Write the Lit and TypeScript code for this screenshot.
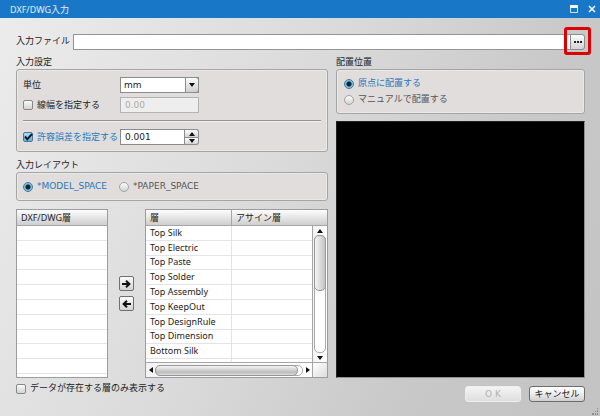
import { LitElement, html, css, svg, nothing } from "lit";
import { customElement, property } from "lit/decorators.js";

const LAYERS = [
  "Top Silk", "Top Electric", "Top Paste", "Top Solder", "Top Assembly",
  "Top KeepOut", "Top DesignRule", "Top Dimension", "Bottom Silk", "",
];

const ARROWS: Record<string, string> = {
  up: "M0 4 L3 0 L6 4 Z",
  down: "M0 0 L6 0 L3 4 Z",
  left: "M4 0 L4 6 L0 3 Z",
  right: "M0 0 L4 3 L0 6 Z",
};

const arrow = (dir: string) => {
  const tall = dir === "left" || dir === "right";
  const w = tall ? 4 : 6;
  const h = tall ? 6 : 4;
  return html`<svg width=${w} height=${h} viewBox="0 0 ${w} ${h}" aria-hidden="true">
    ${svg`<path d=${ARROWS[dir]} fill="#111"/>`}
  </svg>`;
};

@customElement("choice-box")
class ChoiceBox extends LitElement {
  @property() type = "checkbox";
  @property() label = "";
  @property() name = "";
  @property({ type: Boolean }) checked = false;

  static styles = css`
    :host { display: block; }
    label { display: flex; align-items: center; gap: 4px; white-space: nowrap; }
    .mark { display: grid; width: 10px; height: 10px; flex: none; }
    .mark > * { grid-area: 1 / 1; margin: 0; }
    input {
      appearance: none; box-sizing: border-box; width: 10px; height: 10px;
      border: 1px solid #858789; border-radius: 2px;
      background: linear-gradient(#fafafa, #d2d4d4);
    }
    .radio { border-radius: 50%; border-color: #a3a3a3; }
    .on { border-color: #47799b; background: linear-gradient(#b5dbf0, #5fb2df); }
    .radio.on { background: radial-gradient(circle, #15242e 0 2px, #71b8df 3px, #a9d7ef 5px); }
    svg { overflow: visible; pointer-events: none; }
    .text { color: var(--text, #222); }
    .text.lit { color: #2878bb; }
  `;

  render() {
    const on = this.checked ? "on" : "";
    return html`<label>
      <span class="mark">
        <input class="${this.type} ${on}" type=${this.type} name=${this.name} .checked=${this.checked}>
        ${this.checked && this.type === "checkbox"
          ? html`<svg width="10" height="10" viewBox="0 0 10 10"><path d="M2 4.5 L4.3 7.3 L9 2" fill="none" stroke="#0c1a24" stroke-width="2"/></svg>`
          : nothing}
      </span>
      <span class="text ${this.checked ? "lit" : ""}">${this.label}</span>
    </label>`;
  }
}

@customElement("app-root")
class AppRoot extends LitElement {
  static styles = css`
    :host {
      display: flex; flex-direction: column; position: relative;
      box-sizing: border-box; min-height: 100vh;
      font: 9px/13px "DejaVu Sans", "Noto Sans CJK JP", sans-serif;
      color: #222;
      background: linear-gradient(115deg, #ececec, #dadada 45%, #c8c8c8 75%, #c3c3c3);
    }
    * { box-sizing: border-box; }
    button, input, select { font: inherit; color: inherit; margin: 0; padding: 0; }
    button {
      display: flex; align-items: center; justify-content: center;
      border: 1px solid #8b8d8f; background: linear-gradient(#fcfcfc, #d3d3d3);
    }
    svg { display: block; flex: none; }

    .title {
      display: flex; align-items: center; justify-content: space-between;
      height: 18px; padding: 0 4px 0 10px; background: #1877c7; color: #e4f0fa;
    }
    .title h1 { margin: 0; font: inherit; font-family: "Noto Sans", "Noto Sans CJK JP", sans-serif; }
    .window-tools { display: flex; gap: 10px; }
    .window-tools button { border: 0; background: none; width: 8px; height: 10px; }

    main { flex: 1; display: flex; flex-direction: column; padding: 16px 15px 0 16px; }
    .file { display: flex; align-items: center; height: 15px; margin-bottom: 7px; }
    .file label { width: 57px; white-space: nowrap; }
    .file input {
      flex: 1; min-width: 0; height: 16px; background: #fff;
      border: 1px solid #929496; border-right: 0; border-radius: 0;
    }
    .browse-wrap { position: relative; display: flex; }
    .browse { width: 15px; height: 16px; border-radius: 0 3px 3px 0; }
    .highlight {
      position: absolute; inset: -7px -6px -5px -6px; pointer-events: none;
      border: 3px solid #dc0000; border-radius: 3px;
    }

    .columns { flex: 1; display: grid; grid-template-columns: 312fr 249fr; gap: 8px; }
    .column { display: flex; flex-direction: column; min-width: 0; }
    h2 { margin: 0; font: inherit; }
    .panel {
      border: 1px solid #a5a5a5; border-radius: 3px; background: #e1dddd;
      box-shadow: inset 0 0 0 1px #ebe8e8;
    }
    .settings {
      display: grid; grid-template: 16px 16px 8px 16px / 97px 79px 1fr;
      row-gap: 4px; align-items: center; padding: 7px 6px 6px; margin-bottom: 7px;
    }
    .settings > choice-box, .settings > label { grid-column: 1; }
    .settings hr {
      grid-column: 1 / -1; width: 100%; height: 2px;
      margin: 0; border: 0; border-top: 1px solid #939393; border-bottom: 1px solid #f2f0f0;
    }
    .field { display: flex; height: 16px; }
    .field > input, select {
      width: 100%; min-width: 0; height: 16px; padding: 0 4px; border-radius: 0;
      border: 1px solid #898b8d; background: #fff;
    }
    .field > input:disabled { background: #efeeee; border-color: #b3b3b3; color: #aaa; }
    .combo { display: grid; grid-template-columns: 1fr 14px; height: 16px; }
    .combo select { appearance: none; grid-area: 1 / 1 / 2 / 3; padding: 0 3px; }
    .combo span {
      grid-area: 1 / 2; display: grid; place-items: center; pointer-events: none;
      border: 1px solid #8b8d8f; border-radius: 0 3px 3px 0;
      background: linear-gradient(#fcfcfc, #cfcfcf);
    }
    .spin { display: flex; flex-direction: column; flex: none; width: 14px; }
    .spin button { height: 8px; border-left: 0; }
    .spin button:first-child { border-radius: 0 3px 0 0; border-bottom: 0; }
    .spin button:last-child { border-radius: 0 0 3px 0; }

    .radios { display: flex; align-items: center; gap: 12px; height: 29px; padding: 0 6px; margin-bottom: 8px; }
    .radios choice-box, .placement choice-box { --text: #555; }
    .placement {
      display: flex; flex-direction: column; justify-content: center; gap: 3px;
      height: 45px; padding: 0 7px; margin-bottom: 7px;
    }
    .preview { flex: 1; background: #000; border: 1px solid #8f8f8f; border-top-color: #222; border-left-color: #222; }

    .layers { flex: 1; display: grid; grid-template-columns: 92px 1fr 183px; min-height: 169px; }
    .list { display: grid; border: 1px solid #9b9ba2; background: #fff; overflow: hidden; height: 169px; }
    .transfer { display: flex; flex-direction: column; align-items: center; justify-content: center; gap: 5px; }
    .transfer button { width: 15px; height: 15px; border-radius: 2px; border-color: #707070; }
    table { width: 100%; height: 164px; table-layout: fixed; border-collapse: separate; border-spacing: 0; font-family: "Noto Sans", "Noto Sans CJK JP", sans-serif; }
    th {
      height: 16px; padding: 0 4px; text-align: left; font-weight: normal; line-height: 14px;
      background: linear-gradient(#fdfdfd, #cecece); border-bottom: 1px solid #a6a6a6;
    }
    th + th { border-left: 1px solid #a6a6a6; }
    td { height: 14px; padding: 0 4px; line-height: 12px; border-bottom: 1px solid #e4e4e8; white-space: nowrap; }
    td + td { border-left: 1px solid #e0e0ee; }
    .assign { grid-template: 16px 1fr 15px / 1fr 15px; }
    .assign col:first-child { width: 85px; }
    .clip { grid-area: 1 / 1 / 3 / 3; overflow: hidden; min-height: 0; }
    .bar { display: flex; align-items: center; background: linear-gradient(90deg, #f3f3f3, #fff); }
    .bar button { border: 0; background: none; }
    .vertical { grid-area: 2 / 2; flex-direction: column; border-left: 1px solid #a6a6a6; z-index: 1; }
    .vertical button { height: 9px; width: 14px; }
    .horizontal { grid-area: 3 / 1; border-top: 1px solid #a6a6a6; }
    .horizontal button { width: 9px; height: 14px; }
    .track { flex: 1; border: 1px solid #aaa; border-radius: 5px; background: #fff; }
    .vertical .track { width: 12px; }
    .horizontal .track { height: 11px; }
    .thumb { border: 1px solid #989898; border-radius: 5px; }
    .vertical .thumb { height: 56px; width: 12px; margin: -1px; background: linear-gradient(90deg, #f5f5f5, #c3c3c3); }
    .horizontal .thumb { width: 98%; height: 11px; margin: -1px; background: linear-gradient(#f5f5f5, #bcbcbc 70%, #ddd); }
    .corner { grid-area: 3 / 2; border: solid #a6a6a6; border-width: 1px 0 0 1px; background: linear-gradient(135deg, #fff, #ddd); }

    footer { display: flex; justify-content: space-between; height: 38px; padding-top: 4px; }
    .actions { display: flex; gap: 8px; padding-top: 4px; }
    .actions button { width: 56px; height: 16px; border-radius: 3px; border-color: #6c6c6c; background: linear-gradient(#fff, #ededed 50%, #cfcfcf); }
    .actions button:disabled { color: #b2b2b2; border-color: #eee; background: linear-gradient(#f4f4f4, #dfdfdf); }
    .grip { position: absolute; right: 1px; bottom: 1px; }
  `;

  render() {
    return html`
      <header class="title">
        <h1>DXF/DWG入力</h1>
        <div class="window-tools">
          <button aria-label="最大化"><svg width="8" height="8" viewBox="0 0 8 8"><path d="M.5 .5H7.5V7.5H.5Z" fill="none" stroke="#d5e7f7"/><path d="M0 0H8V3H0Z" fill="#f2f8fd"/></svg></button>
          <button aria-label="閉じる"><svg width="8" height="8" viewBox="0 0 8 8"><path d="M1 1L7 7M7 1L1 7" fill="none" stroke="#fff" stroke-width="1.5"/></svg></button>
        </div>
      </header>
      <main>
        <div class="file">
          <label for="path">入力ファイル</label>
          <input id="path" type="text">
          <span class="browse-wrap">
            <button class="browse" aria-label="参照"><svg width="8" height="2" viewBox="0 0 8 2"><path d="M0 0h2v2h-2zM3 0h2v2h-2zM6 0h2v2h-2z" fill="#222"/></svg></button>
            <span class="highlight"></span>
          </span>
        </div>
        <div class="columns">
          <div class="column">
            <h2>入力設定</h2>
            <section class="panel settings">
              <label for="unit">単位</label>
              <span class="combo">
                <select id="unit"><option>mm</option></select>
                <span>${arrow("down")}</span>
              </span>
              <choice-box label="線幅を指定する"></choice-box>
              <span class="field"><input type="text" value="0.00" disabled aria-label="線幅"></span>
              <hr>
              <choice-box label="許容誤差を指定する" checked></choice-box>
              <span class="field">
                <input type="text" value="0.001" aria-label="許容誤差">
                <span class="spin">
                  <button aria-label="増やす">${arrow("up")}</button>
                  <button aria-label="減らす">${arrow("down")}</button>
                </span>
              </span>
            </section>
            <h2>入力レイアウト</h2>
            <section class="panel radios">
              <choice-box type="radio" name="space" label="*MODEL_SPACE" checked></choice-box>
              <choice-box type="radio" name="space" label="*PAPER_SPACE"></choice-box>
            </section>
            <div class="layers">
              <div class="list">
                <table>
                  <thead><tr><th>DXF/DWG層</th></tr></thead>
                  <tbody>${LAYERS.map(() => html`<tr><td></td></tr>`)}</tbody>
                </table>
              </div>
              <div class="transfer">
                <button aria-label="追加"><svg width="9" height="8" viewBox="0 0 9 8"><path d="M0 4H7M4 .8L7.4 4L4 7.2" fill="none" stroke="#111" stroke-width="2"/></svg></button>
                <button aria-label="削除"><svg width="9" height="8" viewBox="0 0 9 8"><path d="M9 4H2M5 .8L1.6 4L5 7.2" fill="none" stroke="#111" stroke-width="2"/></svg></button>
              </div>
              <div class="list assign">
                <div class="clip">
                  <table>
                    <colgroup><col><col></colgroup>
                    <thead><tr><th>層</th><th>アサイン層</th></tr></thead>
                    <tbody>${LAYERS.map((l) => html`<tr><td>${l}</td><td></td></tr>`)}</tbody>
                  </table>
                </div>
                <div class="bar vertical">
                  <button aria-label="上へ">${arrow("up")}</button>
                  <div class="track"><div class="thumb"></div></div>
                  <button aria-label="下へ">${arrow("down")}</button>
                </div>
                <div class="bar horizontal">
                  <button aria-label="左へ">${arrow("left")}</button>
                  <div class="track"><div class="thumb"></div></div>
                  <button aria-label="右へ">${arrow("right")}</button>
                </div>
                <div class="corner"></div>
              </div>
            </div>
          </div>
          <div class="column">
            <h2>配置位置</h2>
            <section class="panel placement">
              <choice-box type="radio" name="origin" label="原点に配置する" checked></choice-box>
              <choice-box type="radio" name="origin" label="マニュアルで配置する"></choice-box>
            </section>
            <div class="preview"></div>
          </div>
        </div>
        <footer>
          <choice-box label="データが存在する層のみ表示する"></choice-box>
          <div class="actions">
            <button disabled>O K</button>
            <button>キャンセル</button>
          </div>
        </footer>
      </main>
      <svg class="grip" width="7" height="7" viewBox="0 0 7 7" aria-hidden="true">
        <path d="M5 0h1v1h-1zM5 2h1v2h-1zM5 5h1v2h-1zM3 3h1v1h-1zM3 5h1v2h-1zM0 5h2v2h-2z" fill="#8e8e8e"/>
      </svg>
    `;
  }
}
